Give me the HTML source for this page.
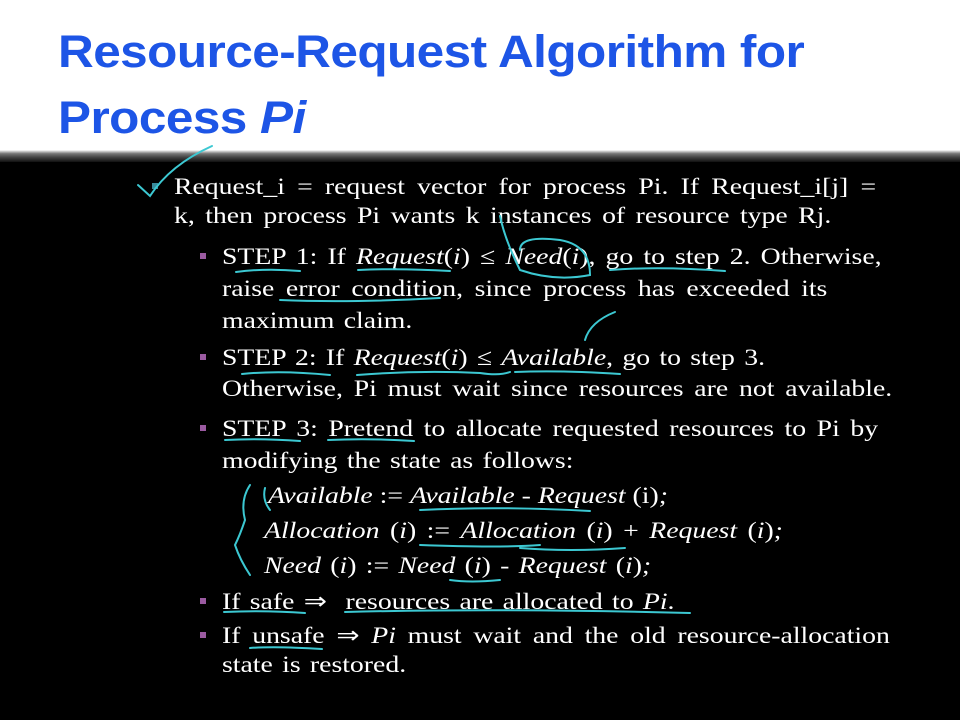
<!DOCTYPE html>
<html><head><meta charset="utf-8"><style>
body{margin:0;width:960px;height:720px;overflow:hidden;background:#000;position:relative;font-family:"Liberation Serif",serif;color:#fff}
.hdr{position:absolute;left:0;top:0;width:960px;height:150px;background:#fff}
.bar{position:absolute;left:0;top:150px;width:960px;height:12px;background:linear-gradient(#fff,#777 30%,#444 60%,#111)}
.t{position:absolute;left:58px;font:bold 45px "Liberation Sans",sans-serif;color:#1d55e6;letter-spacing:-0.5px;white-space:nowrap;transform:scaleX(1.1);transform-origin:left}
.l{position:absolute;font-size:23.5px;white-space:nowrap;line-height:26px;transform:scaleX(1.18);transform-origin:left;word-spacing:2px}
.j{text-align:justify;text-align-last:justify;white-space:normal;word-spacing:0}
.b{position:absolute;width:6px;height:6px}
.b1{background:#3a8a9a}.b2{background:#9a5aa0}
svg{position:absolute;left:0;top:0}
</style></head><body>
<div class="hdr"></div><div class="bar"></div>
<div class="t" style="top:26px">Resource-Request Algorithm for</div>
<div class="t" style="top:92px">Process <i>Pi</i></div>

<div class="b b1" style="left:152px;top:183px"></div>
<div class="l j" style="left:174px;top:174px;width:595px">Request_i = request vector for process Pi. If Request_i[j] =</div>
<div class="l j" style="left:174px;top:203px;width:557px">k, then process Pi wants k instances of resource type Rj.</div>

<div class="b b2" style="left:200px;top:253px"></div>
<div class="l j" style="left:222px;top:244px;width:559px">STEP 1: If <i>Request</i>(<i>i</i>) ≤ <i>Need</i>(<i>i</i>), go to step 2. Otherwise,</div>
<div class="l j" style="left:222px;top:276px;width:513px">raise error condition, since process has exceeded its</div>
<div class="l" style="left:222px;top:308px">maximum claim.</div>

<div class="b b2" style="left:200px;top:354px"></div>
<div class="l" style="left:222px;top:345px">STEP 2: If <i>Request</i>(<i>i</i>) ≤ <i>Available</i>, go to step 3.</div>
<div class="l j" style="left:222px;top:376px;width:568px">Otherwise, Pi must wait since resources are not available.</div>

<div class="b b2" style="left:200px;top:425px"></div>
<div class="l j" style="left:222px;top:416px;width:556px">STEP 3: Pretend to allocate requested resources to Pi by</div>
<div class="l" style="left:222px;top:448px">modifying the state as follows:</div>
<div class="l" style="left:268px;top:483px;word-spacing:0"><i>Available</i> := <i>Available</i> - <i>Request</i> (i)<i>;</i></div>
<div class="l" style="left:264px;top:518px;word-spacing:3px"><i>Allocation</i> (<i>i</i>) := <i>Allocation</i> (<i>i</i>) + <i>Request</i> (<i>i</i>)<i>;</i></div>
<div class="l" style="left:264px;top:553px"><i>Need</i> (<i>i</i>) := <i>Need</i> (<i>i</i>) - <i>Request</i> (<i>i</i>)<i>;</i></div>

<div class="b b2" style="left:200px;top:598px"></div>
<div class="l" style="left:222px;top:589px">If safe ⇒&nbsp; resources are allocated to <i>Pi</i>.</div>
<div class="b b2" style="left:200px;top:632px"></div>
<div class="l j" style="left:222px;top:623px;width:566px">If unsafe ⇒ <i>Pi</i> must wait and the old resource-allocation</div>
<div class="l" style="left:222px;top:652px">state is restored.</div>

<svg width="960" height="720" fill="none" stroke="#3cc8d2" stroke-width="2" stroke-linecap="round">
<path d="M138 185 L150 196 Q170 165 212 146"/>
<path d="M236 272 Q265 268 300 271"/>
<path d="M358 270 Q400 268 450 271"/>
<path d="M500 216 Q505 240 520 270 Q555 282 590 275 Q590 245 560 240 Q520 235 520 250"/>
<path d="M610 270 Q660 266 725 271"/>
<path d="M280 300 Q350 303 440 298"/>
<path d="M585 340 Q590 322 615 312"/>
<path d="M242 374 Q280 370 330 375"/>
<path d="M357 375 Q420 370 480 373 Q500 376 510 372"/>
<path d="M515 372 Q560 370 620 374"/>
<path d="M225 440 Q260 438 300 441"/>
<path d="M328 440 Q370 438 414 441"/>
<path d="M250 485 Q240 500 245 520 Q240 535 235 545 Q240 560 250 575"/>
<path d="M265 488 Q262 500 270 510"/>
<path d="M420 510 Q500 506 590 511"/>
<path d="M420 545 Q500 548 540 545"/>
<path d="M520 548 Q570 552 625 548"/>
<path d="M450 580 Q470 583 500 580"/>
<path d="M224 612 Q265 610 305 613"/>
<path d="M345 612 Q500 608 690 613"/>
<path d="M250 648 Q275 646 322 649"/>
</svg>
</body></html>
